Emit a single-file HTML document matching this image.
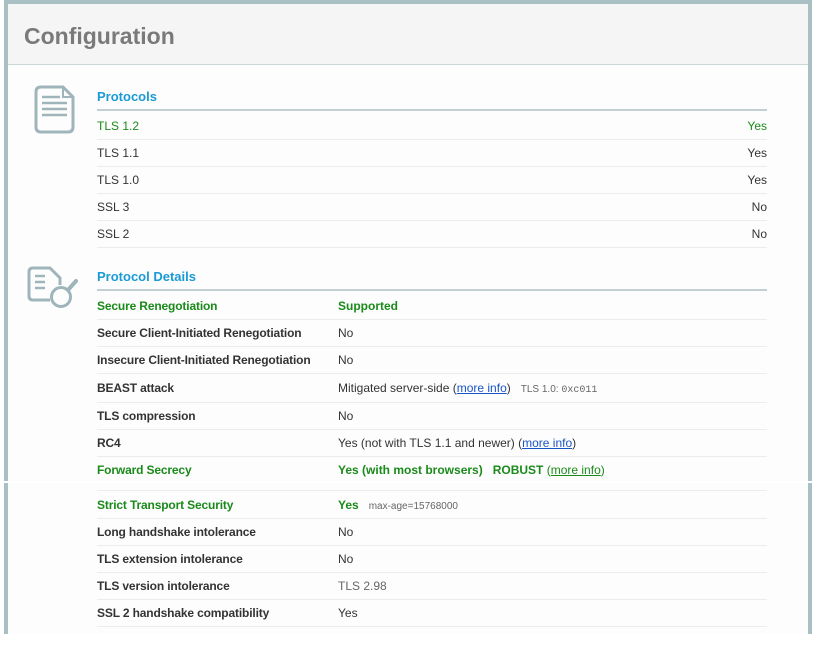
<!DOCTYPE html>
<html><head><style>
*{margin:0;padding:0;box-sizing:border-box}
body{width:813px;height:648px;background:#fff;font-family:"Liberation Sans",Arial,sans-serif;position:relative;overflow:hidden}
.frame{position:absolute;left:4px;top:0;width:808px;height:634px;background:#a9c0c4}
.inner{position:absolute;left:8px;top:4px;width:800px;height:630px;background:#fdfdfd}
.hdr{position:absolute;left:8px;top:4px;width:800px;height:61px;background:#f5f5f5;border-bottom:1px solid #c9d6d8}
.hdr h1{position:absolute;left:16px;top:19px;font-size:23px;color:#7a7a7a;font-weight:bold}
.sec{position:absolute;left:97px;width:670px;font-size:13px;font-weight:bold;color:#1a9ad6;border-bottom:2px solid #c3cfd1;height:23px;padding-top:1px}
.row{position:absolute;left:97px;width:670px;height:27px;border-bottom:1px solid #ececec;font-size:12px;color:#333;line-height:26px}
.row .v{position:absolute;right:0;top:0}
.d .l{position:absolute;left:0;font-weight:bold;letter-spacing:-0.15px}
.d .v{position:absolute;left:241px;right:auto}
.g{color:#1a8a1a!important}
a{color:#1a55c8;text-decoration:underline}
.g a{color:#1a8a1a}
.sm{font-size:10px;color:#666;font-weight:normal}
.brk{position:absolute;left:0;top:481px;width:813px;height:2px;background:#fff}
</style></head><body>
<div class="frame"></div>
<div class="inner"></div>
<div class="hdr"><h1>Configuration</h1></div>

<svg style="position:absolute;left:30px;top:82px" width="50" height="56" viewBox="30 82 50 56" fill="none" stroke="#9fb5bb" stroke-width="3">
<path d="M41 87 H63 L73 97 V127 Q73 132 68 132 H41 Q36 132 36 127 V92 Q36 87 41 87 Z"/>
<path d="M63 87 V97 H73" stroke-width="2"/>
<path d="M42 97H60M42 103H67M42 109H67M42 115H67" stroke-width="2.5"/>
</svg>
<svg style="position:absolute;left:24px;top:262px" width="60" height="52" viewBox="24 262 60 52" fill="none" stroke="#9fb5bb" stroke-width="3">
<path d="M50 300 H33 Q29 300 29 296 V272 Q29 268 33 268 H50 L60 278 V285"/>
<path d="M35 276H45M35 282H45M35 288H45" stroke-width="2.5"/>
<circle cx="61" cy="297" r="9.5" fill="#fdfdfd"/>
<path d="M68 290 L76 281" stroke-linecap="round" stroke-width="4"/>
</svg>

<div class="sec" style="top:88px">Protocols</div>
<div class="row g" style="top:113px">TLS 1.2<span class="v">Yes</span></div>
<div class="row" style="top:140px">TLS 1.1<span class="v">Yes</span></div>
<div class="row" style="top:167px">TLS 1.0<span class="v">Yes</span></div>
<div class="row" style="top:194px">SSL 3<span class="v">No</span></div>
<div class="row" style="top:221px">SSL 2<span class="v">No</span></div>

<div class="sec" style="top:268px">Protocol Details</div>
<div class="row d g" style="top:293px"><span class="l">Secure Renegotiation</span><span class="v" style="font-weight:bold">Supported</span></div>
<div class="row d" style="top:320px"><span class="l">Secure Client-Initiated Renegotiation</span><span class="v">No</span></div>
<div class="row d" style="top:347px"><span class="l">Insecure Client-Initiated Renegotiation</span><span class="v">No</span></div>
<div class="row d" style="top:374px;height:29px;line-height:28px"><span class="l">BEAST attack</span><span class="v">Mitigated server-side (<a>more info</a>) &nbsp; <span class="sm">TLS 1.0: <span style="font-family:'Liberation Mono',monospace">0xc011</span></span></span></div>
<div class="row d" style="top:403px"><span class="l">TLS compression</span><span class="v">No</span></div>
<div class="row d" style="top:430px"><span class="l">RC4</span><span class="v">Yes (not with TLS 1.1 and newer) (<a>more info</a>)</span></div>
<div class="row d g" style="top:457px;height:34px"><span class="l">Forward Secrecy</span><span class="v" style="font-weight:bold">Yes (with most browsers) &nbsp; ROBUST <span style="font-weight:normal">(<a>more info</a>)</span></span></div>
<div class="brk"></div>
<div class="row d g" style="top:491px;height:28px;line-height:28px"><span class="l">Strict Transport Security</span><span class="v" style="font-weight:bold">Yes &nbsp; <span class="sm">max-age=15768000</span></span></div>
<div class="row d" style="top:519px"><span class="l">Long handshake intolerance</span><span class="v">No</span></div>
<div class="row d" style="top:546px"><span class="l">TLS extension intolerance</span><span class="v">No</span></div>
<div class="row d" style="top:573px"><span class="l">TLS version intolerance</span><span class="v" style="color:#666">TLS 2.98</span></div>
<div class="row d" style="top:600px"><span class="l">SSL 2 handshake compatibility</span><span class="v">Yes</span></div>
</body></html>
